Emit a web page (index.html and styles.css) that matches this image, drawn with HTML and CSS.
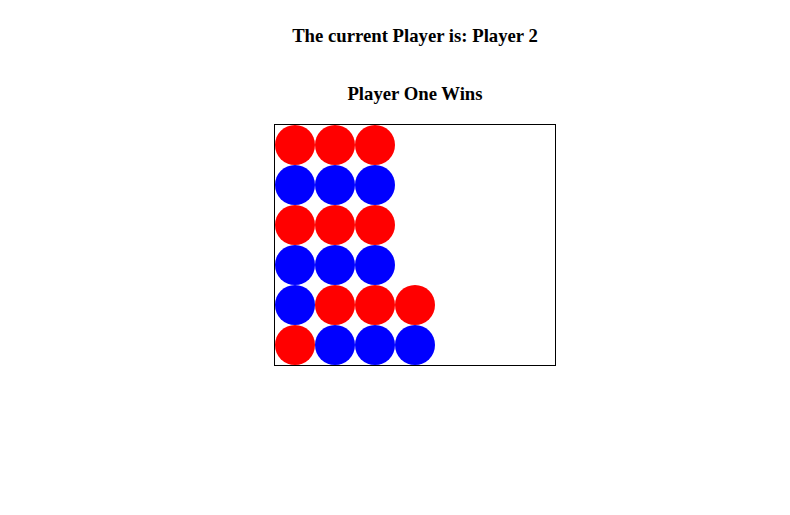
FILE: index.html
```html
<!DOCTYPE html>
<html>
<head>
<meta charset="utf-8">
<link rel="stylesheet" href="styles.css">
</head>
<body>
<div class="game">
  <h3 class="status">The current Player is: Player 2</h3>
  <h3 class="winner">Player One Wins</h3>
  <div class="board">
    <div class="row"><span class="disc red"></span><span class="disc red"></span><span class="disc red"></span></div>
    <div class="row"><span class="disc blue"></span><span class="disc blue"></span><span class="disc blue"></span></div>
    <div class="row"><span class="disc red"></span><span class="disc red"></span><span class="disc red"></span></div>
    <div class="row"><span class="disc blue"></span><span class="disc blue"></span><span class="disc blue"></span></div>
    <div class="row"><span class="disc blue"></span><span class="disc red"></span><span class="disc red"></span><span class="disc red"></span></div>
    <div class="row"><span class="disc red"></span><span class="disc blue"></span><span class="disc blue"></span><span class="disc blue"></span></div>
  </div>
</div>
</body>
</html>
```
FILE: styles.css
```css
html, body {
  margin: 0;
  padding: 0;
  background: #fff;
}

.game {
  display: flex;
  flex-direction: column;
  align-items: center;
  padding: 25px 0 0 48px;
  margin-right: 8px;
  font-family: "Liberation Serif", "Times New Roman", serif;
  color: #000;
}

.status,
.winner {
  margin: 0;
  font-size: 18.72px;
  font-weight: bold;
  line-height: 22px;
}

.winner {
  margin-top: 36px;
  margin-bottom: 19px;
}

.board {
  width: 280px;
  height: 240px;
  border: 1px solid #000;
  display: flex;
  flex-direction: column;
}

.row {
  display: flex;
  height: 40px;
}

.disc {
  width: 40px;
  height: 40px;
  border-radius: 50%;
}

.red { background: #ff0000; }
.blue { background: #0000ff; }
```
